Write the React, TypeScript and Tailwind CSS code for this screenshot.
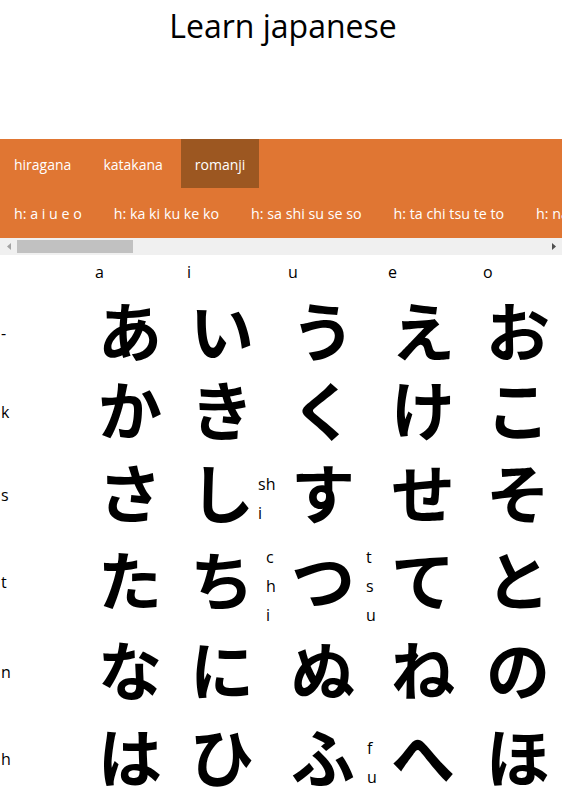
import React from "react";

type Cell = { k: string; ann?: string[]; ml?: string };

const rows: { label: string; h: string; cells: Cell[] }[] = [
  { label: "-", h: "h-[79px]", cells: [{ k: "あ" }, { k: "い" }, { k: "う" }, { k: "え" }, { k: "お" }] },
  { label: "k", h: "h-[80px]", cells: [{ k: "か" }, { k: "き" }, { k: "く" }, { k: "け" }, { k: "こ" }] },
  {
    label: "s",
    h: "h-[85px]",
    cells: [{ k: "さ" }, { k: "し", ann: ["sh", "i"], ml: "ml-[1px]" }, { k: "す" }, { k: "せ" }, { k: "そ" }],
  },
  {
    label: "t",
    h: "h-[90px]",
    cells: [
      { k: "た" },
      { k: "ち", ann: ["c", "h", "i"], ml: "ml-[9px]" },
      { k: "つ", ann: ["t", "s", "u"], ml: "ml-[8px]" },
      { k: "て" },
      { k: "と" },
    ],
  },
  { label: "n", h: "h-[89px]", cells: [{ k: "な" }, { k: "に" }, { k: "ぬ" }, { k: "ね" }, { k: "の" }] },
  {
    label: "h",
    h: "h-[85px]",
    cells: [{ k: "は" }, { k: "ひ" }, { k: "ふ", ann: ["f", "u"], ml: "ml-[9px]" }, { k: "へ" }, { k: "ほ" }],
  },
];

const tabs = ["hiragana", "katakana", "romanji"];
const subs = [
  "h: a i u e o",
  "h: ka ki ku ke ko",
  "h: sa shi su se so",
  "h: ta chi tsu te to",
  "h: na ni nu ne no",
  "h: ha hi fu he ho",
];

export default function App() {
  return (
    <div className="w-[562px] bg-white text-black font-['Open_Sans',sans-serif] overflow-hidden">
      <div className="h-[139px]">
        <h1 className="pt-[4px] pl-[4px] text-center text-[32px] leading-[44px] font-normal">Learn japanese</h1>
      </div>

      <div className="bg-[#e07633] text-white text-[14px]">
        <div className="flex gap-[4px] whitespace-nowrap">
          {tabs.map((t) => (
            <div
              key={t}
              className={
                "h-[49px] px-[14px] pt-[3px] leading-[46px] " + (t === "romanji" ? "bg-[#9c5721]" : "")
              }
            >
              {t}
            </div>
          ))}
        </div>
        <div className="flex gap-[4px] whitespace-nowrap overflow-hidden text-[14.25px]">
          {subs.map((s) => (
            <div key={s} className="h-[50px] px-[14px] pt-[2px] leading-[48px] shrink-0">
              {s}
            </div>
          ))}
        </div>
      </div>

      <div className="flex h-[17px] items-center bg-[#f0f0f0]">
        <div className="flex w-[17px] h-full items-center justify-center">
          <svg width="4" height="7" viewBox="0 0 4 7">
            <polygon points="4,0 0,3.5 4,7" fill="#a3a3a3" />
          </svg>
        </div>
        <div className="h-[13px] w-[116px] bg-[#c1c1c1]" />
        <div className="flex-1" />
        <div className="flex w-[17px] h-full items-center justify-center">
          <svg width="4" height="7" viewBox="0 0 4 7">
            <polygon points="0,0 4,3.5 0,7" fill="#505050" />
          </svg>
        </div>
      </div>

      <div className="grid grid-cols-[95px_92px_101px_100px_95px_1fr] text-[16px]">
        <div className="h-[33px] pt-[5px] leading-[24px]" />
        {["a", "i", "u", "e", "o"].map((v) => (
          <div key={v} className="h-[33px] pt-[5px] leading-[24px]">
            {v}
          </div>
        ))}
        {rows.map((r) => (
          <React.Fragment key={r.label}>
            <div className={r.h + " flex items-center pl-[1px] pt-[10px] leading-[24px]"}>{r.label}</div>
            {r.cells.map((c) => (
              <div key={c.k} className={r.h + " flex items-center"}>
                <span className="w-[70px] shrink-0 text-center text-[64px] leading-none font-bold font-['Noto_Sans_CJK_JP',sans-serif]">
                  {c.k}
                </span>
                {c.ann && (
                  <div className={(c.ml ?? "") + " pt-[18px] leading-[29px]"}>
                    {c.ann.map((a, i) => (
                      <div key={i}>{a}</div>
                    ))}
                  </div>
                )}
              </div>
            ))}
          </React.Fragment>
        ))}
      </div>
    </div>
  );
}
